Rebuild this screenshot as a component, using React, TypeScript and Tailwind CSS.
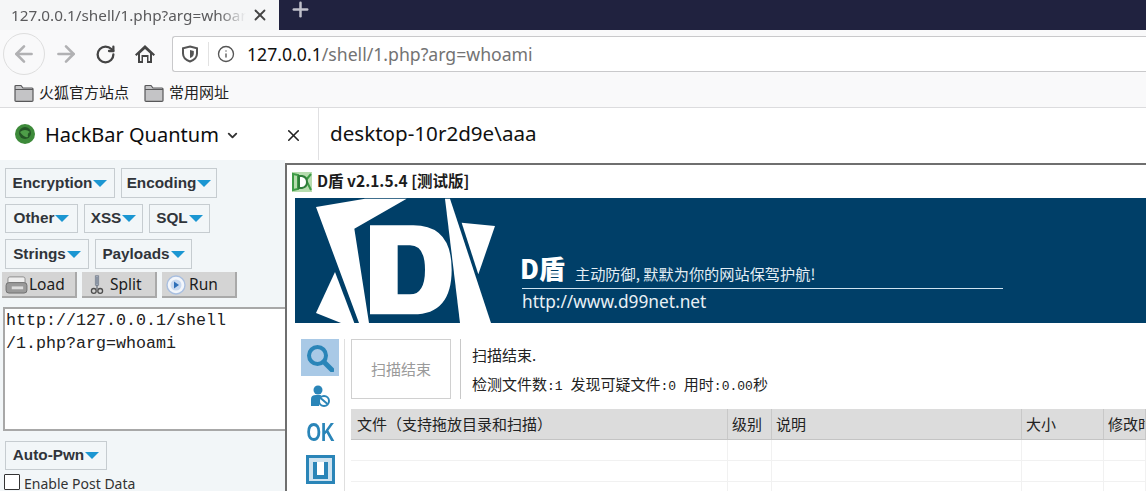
import { ArrowLeft, ArrowRight, ChevronDown, Info, Plus, RotateCw, X } from "lucide-react";

const ui = "font-['Noto_Sans','Noto_Sans_CJK_SC',sans-serif]";
const cjk = "font-['Noto_Sans_CJK_SC','Noto_Sans',sans-serif]";

function Folder({ className }: { className?: string }) {
  return (
    <svg viewBox="0 0 20 18" className={className}>
      <path d="M1 16.5V2.5q0-1 1-1h5l2 2.5h9q1 0 1 1v11.5q0 .8-1 .8H2q-1 0-1-.8z" fill="#c4c4c6" stroke="#58585a" strokeWidth="1.2" />
      <path d="M1 5.5h18" stroke="#58585a" strokeWidth="1" />
    </svg>
  );
}

function MenuButton({ label, className }: { label: string; className: string }) {
  return (
    <button className={`flex items-center justify-center border border-[#c6ccd0] bg-[#f2f6f8] font-['Liberation_Sans',sans-serif] text-[15.3px] font-bold text-[#30343a] ${className}`}>
      {label}
      <span className="ml-[1px] h-0 w-0 border-x-[7px] border-t-[7px] border-x-transparent border-t-[#1b96d2]" />
    </button>
  );
}

function ToolButton({ label, icon, gap }: { label: string; icon: React.ReactNode; gap: string }) {
  return (
    <button className={`flex h-[26px] w-[75px] items-center bg-[#d4d4d4] pl-[3px] pt-[1px] ${gap} border-b-2 border-r-2 border-[#a9a9a9] ${ui} text-[15.5px] text-[#1c1c1c]`}>
      {icon}
      {label}
    </button>
  );
}

function HackBar() {
  return (
    <aside className="flex h-[331px] w-[285px] shrink-0 flex-col bg-[#f2f6f8]">
      <div className="flex gap-[6px] pl-[5px] pt-[8px]">
        <MenuButton label="Encryption" className="h-[30px] w-[110px]" />
        <MenuButton label="Encoding" className="h-[30px] w-[96px]" />
      </div>
      <div className="flex gap-[6px] pl-[5px] pt-[6px]">
        <MenuButton label="Other" className="h-[29px] w-[73px]" />
        <MenuButton label="XSS" className="h-[29px] w-[59px]" />
        <MenuButton label="SQL" className="h-[29px] w-[61px]" />
      </div>
      <div className="flex gap-[6px] pl-[5px] pt-[6px]">
        <MenuButton label="Strings" className="h-[30px] w-[84px]" />
        <MenuButton label="Payloads" className="h-[30px] w-[97px]" />
      </div>
      <div className="flex gap-[5px] pl-[2px] pt-[3px]">
        <ToolButton
          label="Load"
          gap="gap-[1px]"
          icon={
            <svg viewBox="0 0 24 20" className="h-[19px] w-[23px]">
              <rect x="3" y="2" width="18" height="8" rx="2" fill="#eeeeee" stroke="#8b8b8b" />
              <rect x="1" y="8" width="22" height="11" rx="3" fill="#9a9a9a" stroke="#6f6f6f" />
              <rect x="7" y="12" width="12" height="3" fill="#dddddd" />
            </svg>
          }
        />
        <ToolButton
          label="Split"
          gap="gap-[5px]"
          icon={
            <svg viewBox="0 0 20 24" className="ml-[4px] h-[23px] w-[16px]">
              <path d="M8 1h4v12H8z" fill="#c9d4e6" stroke="#6d7683" />
              <path d="M10 2v10M10 13v5" stroke="#5b6470" strokeWidth="1.4" />
              <circle cx="6" cy="20" r="3" fill="none" stroke="#4d4d4d" strokeWidth="1.6" />
              <circle cx="14" cy="20" r="3" fill="none" stroke="#4d4d4d" strokeWidth="1.6" />
            </svg>
          }
        />
        <ToolButton
          label="Run"
          gap="gap-[3px]"
          icon={
            <svg viewBox="0 0 20 20" className="ml-[1px] h-[20px] w-[20px]">
              <circle cx="10" cy="10" r="9" fill="#f3f6fb" stroke="#a9bfe0" strokeWidth="1.4" />
              <circle cx="10" cy="10" r="5.5" fill="#c9d9f0" />
              <path d="M8 6.5l5 3.5-5 3.5z" fill="#2f6fb8" />
            </svg>
          }
        />
      </div>
      <div className="ml-[3px] mt-[9px] h-[124px] w-[283px] shrink-0 border-2 border-r-0 border-[#a8a8a8] bg-white pl-[1px] font-['Liberation_Mono',monospace] text-[16.67px] leading-[23px] text-[#222]">
        http://127.0.0.1/shell
        <br />
        /1.php?arg=whoami
      </div>
      <div className="pl-[5px] pt-[10px]">
        <MenuButton label="Auto-Pwn" className="h-[29px] w-[102px]" />
      </div>
      <label className={`flex items-start gap-[4px] pl-[4px] pt-[4px] ${ui} text-[14px] leading-[18px] text-[#333]`}>
        <span className="h-[16px] w-[16px] shrink-0 rounded-[1px] border border-[#333] bg-white" />
        <span className="pt-[1px]">Enable Post Data</span>
      </label>
    </aside>
  );
}

function DShieldLogo() {
  return (
    <svg viewBox="30 113 600 375" className="h-[125px] w-[200px] shrink-0">
      <path d="M93 140L240 115H365L208 205L252 488H222Z" fill="#fff" />
      <path d="M150 335L208 488H168L93 458Z" fill="#fff" />
      <path d="M480 115H495L618 488H525Z" fill="#fff" />
      <path d="M530 187L630 197L580 342Z" fill="#fff" />
      <path
        fillRule="evenodd"
        d="M255 195H385Q500 195 500 328Q500 462 385 462H255ZM338 255V402H375Q420 402 420 328Q420 255 375 255Z"
        fill="#fff"
      />
    </svg>
  );
}

function Table() {
  const cols = ["w-[377px]", "w-[44px]", "w-[250px]", "w-[82px]", "flex-1"];
  const heads = ["文件（支持拖放目录和扫描）", "级别", "说明", "大小", "修改时间"];
  return (
    <div className="mt-[10px] min-w-0 flex-1 overflow-hidden">
      <div className="flex h-[31px] border-b border-[#c4c4c4] bg-[#dcdcdc]">
        {heads.map((h, i) => (
          <div key={h} className={`${cols[i]} shrink-0 overflow-hidden whitespace-nowrap border-r border-[#c8c8c8] pl-[4px] text-[15px] leading-[30px] text-[#222] first:pl-[6px]`}>
            {h}
          </div>
        ))}
      </div>
      {[0, 1, 2].map((row) => (
        <div key={row} className="flex h-[21px] border-b border-[#f1f1f1]">
          {cols.map((c) => (
            <div key={c} className={`${c} shrink-0 border-r border-[#f1f1f1]`} />
          ))}
        </div>
      ))}
    </div>
  );
}

function Ascii({ children }: { children: string }) {
  return <span className="whitespace-pre font-['Liberation_Mono',monospace] text-[13px]">{children}</span>;
}

function DShieldWindow() {
  return (
    <section className={`mt-[3px] h-[328px] min-w-0 flex-1 overflow-hidden border-l-2 border-t-2 border-[#6f6f6f] bg-white ${cjk}`}>
      <div className="flex h-[33px] items-center pl-[5px]">
        <svg viewBox="0 0 20 20" className="h-[20px] w-[20px]">
          <rect width="20" height="20" fill="#b6dcae" />
          <path d="M1 2l5 1v14l-5 1zM19 2l-5 6 5 10" fill="none" stroke="#3d9b45" strokeWidth="2" />
          <path d="M7 4h3q5 1 5 6t-5 6H7z" fill="#fff" stroke="#2f7d3a" strokeWidth="2" />
        </svg>
        <span className="ml-[5px] -translate-y-[1px] text-[15.5px] font-bold text-[#1c1c1c]">D盾 v2.1.5.4 [测试版]</span>
      </div>
      <div className="ml-[8px] flex h-[125px] bg-[#003f68]">
        <DShieldLogo />
        <div className="ml-[27px] w-[481px] shrink-0 text-white">
          <div className="flex h-[91px] items-end border-b border-[#cfe2ef] pb-[4px]">
            <span className="-ml-[2px] text-[26px] font-black leading-[32px]">D盾</span>
            <span className="ml-[10px] whitespace-nowrap text-[15.2px] leading-[22px] text-[#e3edf3]">主动防御, 默默为你的网站保驾护航!</span>
          </div>
          <div className={`${ui} pt-[1px] text-[17.3px] leading-[24px] text-[#e8f0f5]`}>http://www.d99net.net</div>
        </div>
      </div>
      <div className="flex h-[168px]">
        <div className="ml-[14px] mt-[16px] flex h-[152px] w-[44px] shrink-0 flex-col items-center border-r border-[#dfdfdf] pr-[5px]">
          <div className="flex h-[37px] w-[38px] shrink-0 items-center justify-center bg-[#a9c9e6]">
            <svg viewBox="0 0 28 28" className="h-[28px] w-[28px]">
              <circle cx="11.5" cy="11.5" r="8.5" fill="none" stroke="#2a85b8" strokeWidth="4" />
              <path d="M18 18l8 8" stroke="#2a85b8" strokeWidth="5" strokeLinecap="round" />
            </svg>
          </div>
          <svg viewBox="0 0 22 24" className="mt-[8px] h-[24px] w-[22px] shrink-0">
            <circle cx="9" cy="6" r="4.5" fill="#2a85b8" />
            <path d="M2 22V15q0-4 5-4h5l-2 11z" fill="#2a85b8" />
            <circle cx="15" cy="17" r="5" fill="#fff" stroke="#2a85b8" strokeWidth="2" />
            <path d="M11.5 14l7 6" stroke="#2a85b8" strokeWidth="2" />
          </svg>
          <span className="mt-[10px] font-['Liberation_Sans',sans-serif] text-[26px] font-bold leading-[28px] text-[#2a85b8] [transform:scaleX(0.72)]">OK</span>
          <div className="mt-[9px] flex h-[29px] w-[29px] shrink-0 items-end justify-center border-[3px] border-[#2a85b8] bg-[#cfe3f0] p-[2px]">
            <div className="h-[17px] w-[15px] border-x-[4px] border-b-[4px] border-[#2a85b8] bg-white" />
          </div>
        </div>
        <div className="ml-[6px] flex min-w-0 flex-1 flex-col pt-[16px]">
          <div className="flex h-[60px] shrink-0">
            <button className="h-[60px] w-[100px] shrink-0 border border-[#d0d0d0] text-[15px] text-[#9a9a9a]">扫描结束</button>
            <div className="ml-[9px] w-px bg-[#c8c8c8]" />
            <div className="ml-[11px] text-[#222]">
              <p className="pt-[4px] text-[15px] leading-[24px]">扫描结束.</p>
              <p className="mt-[5px] whitespace-nowrap text-[15px] leading-[24px]">
                检测文件数<Ascii>:1 </Ascii>发现可疑文件<Ascii>:0 </Ascii>用时<Ascii>:0.00</Ascii>秒
              </p>
            </div>
          </div>
          <Table />
        </div>
      </div>
    </section>
  );
}

export default function App() {
  return (
    <div className={`h-[491px] w-[1146px] overflow-hidden bg-white ${ui}`}>
      {/* tabs */}
      <div className="flex h-[30px] bg-[#20223f]">
        <div className="flex w-[279px] items-center bg-[#f5f6f7] pl-[11px]">
          <span className="w-[235px] overflow-hidden whitespace-nowrap text-[15.3px] leading-[20px] text-[#5a5a5c] [mask-image:linear-gradient(to_right,black_88%,transparent)]">
            127.0.0.1/shell/1.php?arg=whoami
          </span>
          <X className="ml-[5px] h-[18px] w-[18px] text-[#444]" strokeWidth={2.4} />
        </div>
        <Plus className="ml-[10px] h-[23px] w-[23px] -translate-y-[2px] text-[#c0c1cb]" strokeWidth={2.6} />
      </div>

      {/* toolbar */}
      <div className="flex h-[48px] items-center bg-[#f9f9fa] pl-[3px]">
        <div className="flex h-[42px] w-[42px] items-center justify-center rounded-full border border-[#dedede]">
          <ArrowLeft className="h-[26px] w-[26px] text-[#b1b1b3]" strokeWidth={2.4} />
        </div>
        <ArrowRight className="ml-[8px] h-[26px] w-[26px] text-[#b1b1b3]" strokeWidth={2.4} />
        <RotateCw className="ml-[16px] h-[21px] w-[21px] text-[#444]" strokeWidth={2.6} />
        <svg viewBox="0 0 22 22" className="ml-[18px] h-[22px] w-[22px]">
          <path d="M11 2L1 11.5l1.5 1.5L4 11.600V20h5v-6h4v6h5v-8.400l1.500 1.400 1.500-1.500z" fill="#444" />
          <path d="M6 10.500l5-4.500 5 4.500V18h-1.500v-6h-7v6H6z" fill="#f9f9fa" />
        </svg>
        <div className="ml-[16px] flex h-[36px] flex-1 items-center rounded-l-[3px] border border-r-0 border-[#c9c9cb] bg-white pl-[8px]">
          <svg viewBox="0 0 18 18" className="h-[18px] w-[18px]">
            <path d="M9 1.500l7 1.700v5.300q0 5.500-7 8-7-2.500-7-8V3.200z" fill="none" stroke="#555" strokeWidth="2" />
            <path d="M9 5l3.800.9v2.800q0 2.800-3.800 4.300z" fill="#555" />
          </svg>
          <div className="ml-[9px] h-[24px] w-px bg-[#e2e2e2]" />
          <Info className="ml-[8px] h-[18px] w-[18px] text-[#555]" strokeWidth={1.8} />
          <span className="ml-[12px] text-[17.65px] text-[#737373]">
            <span className="text-[#111]">127.0.0.1</span>/shell/1.php?arg=whoami
          </span>
        </div>
      </div>

      {/* bookmarks */}
      <div className={`flex h-[30px] items-center border-b border-[#dcdcde] bg-[#f9f9fa] pl-[14px] ${cjk} text-[15px] text-[#222]`}>
        <Folder className="h-[18px] w-[20px]" />
        <span className="ml-[5px]">火狐官方站点</span>
        <Folder className="ml-[15px] h-[18px] w-[20px]" />
        <span className="ml-[5px]">常用网址</span>
      </div>

      {/* sidebar header + page output */}
      <div className="flex h-[52px] bg-white">
        <div className="flex w-[319px] shrink-0 items-center border-r border-[#e0e0e2] pl-[15px] pt-[2px]">
          <svg viewBox="0 0 20 20" className="h-[20px] w-[20px] -translate-y-[1px]">
            <circle cx="10" cy="10" r="10" fill="#3d8a3a" />
            <circle cx="10" cy="9" r="6" fill="#245526" />
            <path d="M5 8q5-4 10 0-3 1-2 5-4 1-8-5z" fill="#4e9d48" />
          </svg>
          <span className="ml-[10px] text-[20px] text-[#0c0c0d]">HackBar Quantum</span>
          <ChevronDown className="ml-[6px] h-[15px] w-[15px] text-[#333]" strokeWidth={3} />
          <X className="ml-[44px] h-[19px] w-[19px] text-[#222]" strokeWidth={2} />
        </div>
        <div className="pl-[11px] pt-[10px] text-[20.6px] text-[#111]">desktop-10r2d9e\aaa</div>
      </div>

      {/* hackbar panel and the desktop window on top of the page */}
      <div className="flex">
        <HackBar />
        <DShieldWindow />
      </div>
    </div>
  );
}
